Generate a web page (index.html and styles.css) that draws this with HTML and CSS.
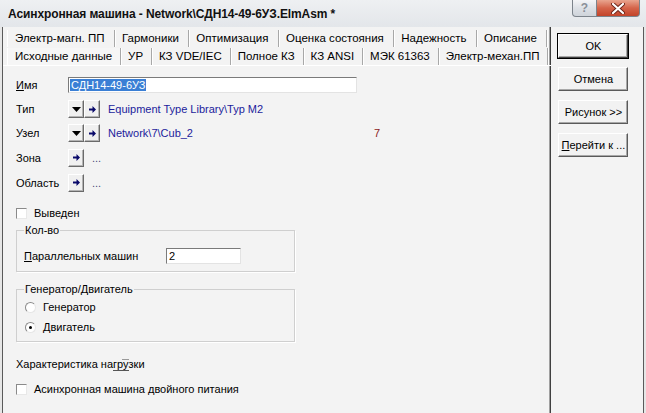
FILE: index.html
```html
<!DOCTYPE html>
<html lang="ru">
<head>
    <meta charset="UTF-8">
    <title>Асинхронная машина</title>
    <link rel="stylesheet" href="styles.css">
</head>
<body>
<div class="window">
    <div class="titlebar">
        <span class="title">Асинхронная машина - Network\СДН14-49-6УЗ.ElmAsm *</span>
        <div class="caption-btns">
            <span class="cap help">?</span>
            <span class="cap close">
                <svg width="14" height="11" viewBox="0 0 14 11"><path d="M2 1 L12 10 M12 1 L2 10" stroke="#6b2418" stroke-width="4" stroke-linecap="round"/><path d="M2 1 L12 10 M12 1 L2 10" stroke="#fff" stroke-width="2.2" stroke-linecap="round"/></svg>
            </span>
        </div>
    </div>

    <div class="main">
        <div class="tabctl">
            <div class="tabrow back">
                <span class="tab first">Электр-магн. ПП</span>
                <span class="tab">Гармоники</span>
                <span class="tab">Оптимизация</span>
                <span class="tab">Оценка состояния</span>
                <span class="tab">Надежность</span>
                <span class="tab">Описание</span>
            </div>
            <div class="tabrow front">
                <span class="tab first active">Исходные данные</span>
                <span class="tab">УР</span>
                <span class="tab">КЗ VDE/IEC</span>
                <span class="tab">Полное КЗ</span>
                <span class="tab">КЗ ANSI</span>
                <span class="tab">МЭК 61363</span>
                <span class="tab">Электр-механ.ПП</span>
            </div>

            <div class="panel">
                <div class="field">
                    <span class="lbl"><u>И</u>мя</span>
                    <span class="edit name"><span class="sel">СДН14-49-6УЗ</span></span>
                </div>
                <div class="field">
                    <span class="lbl">Тип</span>
                    <span class="sbtn"><svg width="9" height="5" viewBox="0 0 9 5"><path d="M0 0h9L4.5 5z" fill="#000"/></svg></span>
                    <span class="sbtn"><svg width="7" height="7" viewBox="0 0 7 7"><path d="M0 2.5h3.5V0L7 3.5 3.5 7V4.5H0z" fill="#0a0a6a"/></svg></span>
                    <span class="link">Equipment Type Library\Typ M2</span>
                </div>
                <div class="field">
                    <span class="lbl">Узел</span>
                    <span class="sbtn"><svg width="9" height="5" viewBox="0 0 9 5"><path d="M0 0h9L4.5 5z" fill="#000"/></svg></span>
                    <span class="sbtn"><svg width="7" height="7" viewBox="0 0 7 7"><path d="M0 2.5h3.5V0L7 3.5 3.5 7V4.5H0z" fill="#0a0a6a"/></svg></span>
                    <span class="link node">Network\7\Cub_2</span>
                    <span class="num">7</span>
                </div>
                <div class="field tall">
                    <span class="lbl">Зона</span>
                    <span class="sbtn"><svg width="7" height="7" viewBox="0 0 7 7"><path d="M0 2.5h3.5V0L7 3.5 3.5 7V4.5H0z" fill="#0a0a6a"/></svg></span>
                    <span class="dots">...</span>
                </div>
                <div class="field tall">
                    <span class="lbl">Область</span>
                    <span class="sbtn"><svg width="7" height="7" viewBox="0 0 7 7"><path d="M0 2.5h3.5V0L7 3.5 3.5 7V4.5H0z" fill="#0a0a6a"/></svg></span>
                    <span class="dots">...</span>
                </div>

                <div class="check out">
                    <span class="box"></span>
                    <span>Выведен</span>
                </div>

                <fieldset class="group qty">
                    <legend>Кол-во</legend>
                    <div class="qty-row">
                        <span class="qty-lbl"><u>П</u>араллельных машин</span>
                        <span class="edit count">2</span>
                    </div>
                </fieldset>

                <fieldset class="group mode">
                    <legend>Генератор/Двигатель</legend>
                    <div class="radio">
                        <span class="dot"></span>
                        <span>Генератор</span>
                    </div>
                    <div class="radio">
                        <span class="dot on"></span>
                        <span>Двигатель</span>
                    </div>
                </fieldset>

                <div class="plain">Характеристика на<span class="mark">гру</span>зки</div>

                <div class="check dual">
                    <span class="box"></span>
                    <span>Асинхронная машина двойного питания</span>
                </div>
            </div>
        </div>

        <div class="side">
            <span class="btn default">OK</span>
            <span class="btn">Отмена</span>
            <span class="btn">Рисунок &gt;&gt;</span>
            <span class="btn"><u>П</u>ерейти к ...</span>
        </div>
    </div>
</div>
</body>
</html>
```

FILE: styles.css
```css
body {
    margin: 0;
    font-family: "Liberation Sans", Arial, sans-serif;
    font-size: 11px;
    color: #000;
    background: #f3f3f3;
}
.window {
    width: 646px;
    height: 413px;
    overflow: hidden;
    background: #f3f3f3;
    box-shadow: inset 2px 0 0 #e6e6e6, inset 3px 0 0 #5a5a5a, inset -2px 0 0 #e6e6e6, inset -3px 0 0 #5a5a5a;
}

/* title bar */
.titlebar {
    height: 27px;
    display: flex;
    background: linear-gradient(180deg, #eef0f2 0%, #e3e6ea 100%);
}
.title {
    padding: 7px 0 0 8px;
    font-weight: bold;
    font-size: 12px;
    letter-spacing: -0.1px;
    color: #111;
}
.caption-btns {
    margin-left: auto;
    margin-right: 6px;
    display: flex;
    height: 17px;
}
.cap {
    display: flex;
    align-items: center;
    justify-content: center;
    height: 16px;
    border: 1px solid #7c838b;
    border-top: none;
}
.help {
    width: 23px;
    color: #8a9099;
    font-weight: bold;
    font-size: 12px;
    border-radius: 0 0 0 4px;
    background: linear-gradient(180deg, #f4f5f7 0%, #dde1e6 50%, #cfd4da 100%);
}
.close {
    width: 42px;
    border-left: none;
    border-radius: 0 0 4px 0;
    background: linear-gradient(180deg, #e9a58f 0%, #d5644a 50%, #c2442a 100%);
}

.main {
    display: flex;
    height: 386px;
}

/* tab control */
.tabctl {
    margin-left: 3px;
    width: 551px;
    display: flex;
    flex-direction: column;
    box-shadow: inset -1px 0 0 #404040, inset -2px 0 0 #a0a0a0;
}
.tabrow {
    display: flex;
    margin: 0 3px 0 4px;
    font-size: 11.5px;
}
.tabrow.back {
    height: 17px;
    margin-top: 3px;
    margin-right: 4px;
}
.tabrow.front {
    height: 17px;
    padding-top: 1px;
}
.tab {
    flex: auto;
    padding: 0 6px 0 7px;
    line-height: 17px;
    white-space: nowrap;
    border-right: 1px solid #a8a8a8;
    box-shadow: 1px 0 0 #fff;
}
.tab.first {
    border-left: 1px solid #fff;
}
.tab.active {
    background: #f6f6f6;
}

.panel {
    flex: 1;
    padding: 7px 0 0 13px;
    border-top: 1px solid #fff;
}

.field {
    display: flex;
    align-items: center;
    height: 24px;
}
.field.tall {
    height: 25px;
}
.lbl {
    width: 52px;
}
.edit {
    height: 14px;
    line-height: 14px;
    background: #fff;
    border: 1px solid;
    border-color: #7a7a7a #e3e3e3 #e3e3e3 #7a7a7a;
    padding: 0 2px;
}
.edit.name {
    width: 284px;
    padding-left: 1px;
}
.sel {
    background: #3a7fd5;
    color: #fff;
    padding: 0 1px;
}
.sbtn {
    width: 14px;
    height: 16px;
    display: flex;
    align-items: center;
    justify-content: center;
    background: #f0f0f0;
    border: 1px solid;
    border-color: #fff #6a6a6a #6a6a6a #fff;
    box-shadow: inset -1px -1px 0 #b4b4b4;
}
.link {
    margin-left: 8px;
    color: #1c1c9c;
}
.link.node {
    width: 266px;
}
.num {
    color: #8b2222;
}
.dots {
    margin-left: 8px;
    color: #4a4a7a;
}

.check {
    display: flex;
    align-items: center;
    height: 18px;
    gap: 7px;
}
.check.out {
    margin-top: 9px;
}
.check.dual {
    margin-top: 7px;
}
.box {
    width: 9px;
    height: 9px;
    background: #fff;
    border: 1px solid;
    border-color: #8a8a8a #e8e8e8 #e8e8e8 #8a8a8a;
}

.group {
    width: 263px;
    margin: 0;
    padding: 0 7px 4px 7px;
    border: 1px solid #cfcfcf;
    box-shadow: 1px 1px 0 #fff;
}
.group legend {
    padding: 0 1px;
    line-height: 16px;
}
.group.qty {
    margin-top: 0;
}
.group.mode {
    margin-top: 9px;
}
.qty-row {
    display: flex;
    align-items: center;
    height: 22px;
    margin-top: 7px;
}
.qty-lbl {
    width: 142px;
}
.edit.count {
    width: 69px;
    height: 14px;
}

.radio {
    display: flex;
    align-items: center;
    height: 20px;
    gap: 7px;
    padding-left: 1px;
}
.dot {
    width: 9px;
    height: 9px;
    border-radius: 50%;
    background: #fff;
    border: 1px solid;
    border-color: #8a8a8a #e6e6e6 #e6e6e6 #8a8a8a;
    position: relative;
}
.dot.on::after {
    content: "";
    position: absolute;
    left: 3px;
    top: 3px;
    width: 3px;
    height: 3px;
    border-radius: 50%;
    background: #000;
}

.plain {
    margin-top: 13px;
    height: 18px;
    line-height: 18px;
}
.mark {
    position: relative;
    border-bottom: 1px solid #555;
}
.mark::before {
    content: "";
    position: absolute;
    right: 0;
    top: 1px;
    width: 7px;
    border-top: 1px solid #999;
}

/* right buttons */
.side {
    width: 88px;
    display: flex;
    flex-direction: column;
    gap: 9px;
    padding: 7px 0 0 7px;
}
.btn {
    width: 68px;
    height: 22px;
    display: flex;
    align-items: center;
    justify-content: center;
    background: #f2f2f2;
    border: 1px solid;
    border-color: #fff #5a5a5a #5a5a5a #fff;
    box-shadow: inset -1px -1px 0 #a8a8a8;
    white-space: nowrap;
}
.btn.default {
    outline: 1px solid #000;
    outline-offset: 0;
    border-color: #fff #404040 #404040 #fff;
}
```
